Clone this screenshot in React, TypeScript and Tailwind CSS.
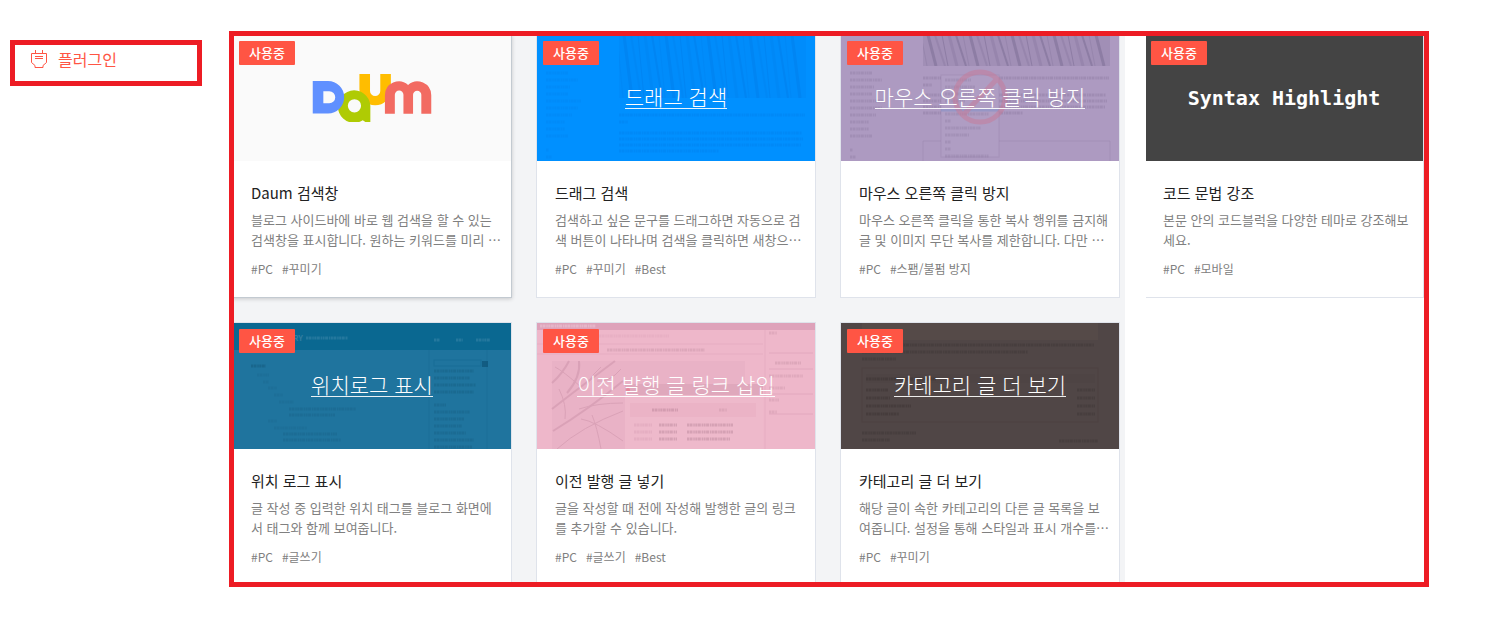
import type { ReactNode } from 'react'
import { clsx } from 'clsx'

interface Plugin {
  id: string
  name: string
  lines: string[]
  tags: string[]
  bannerClass: string
  banner: ReactNode
  art?: ReactNode
  active?: boolean
}

interface TextRowsProps {
  x: number
  y: number
  widths: number[]
  step?: number
  color: string
  opacity?: number
}

// Barely visible "lines of text" inside the banner thumbnails
function TextRows({ x, y, widths, step = 7, color, opacity = 0.15 }: TextRowsProps) {
  return (
    <g stroke={color} strokeWidth="3" strokeDasharray="2 0.5 3 0.8 1.5 0.5" opacity={opacity * 0.55}>
      {widths.map((w, i) => (
        <path key={i} d={`M${x} ${y + i * step}h${w}`} />
      ))}
    </g>
  )
}

function Records({ height, color, opacity }: { height: number; color: string; opacity: number }) {
  const slots = Array.from({ length: 26 }, (_, i) => i)
  return (
    <svg x="82" y="0" width="187" height={height} stroke={color}>
      <rect width="187" height={height} fill={color} stroke="none" opacity={opacity / 2} />
      {slots.map((i) => (
        <path
          key={i}
          d={`M${i * 7 - 2} 0L${i * 7 + 4 + (i % 3) * 2} ${height}`}
          strokeWidth={1 + ((i * 5) % 3)}
          opacity={i % 2 ? opacity : opacity * 0.5}
        />
      ))}
    </svg>
  )
}

function DragArt() {
  return (
    <>
      <Records height={63} color="#0066d0" opacity={0.18} />
      <TextRows x={9} y={38} widths={[22, 32, 24, 22, 35, 32, 26, 19, 19, 22]} color="#0058c0" />
      <TextRows x={9} y={115} widths={[3, 6]} color="#0058c0" />
      <TextRows x={82} y={80} widths={[186, 9]} color="#0058c0" opacity={0.2} />
      <TextRows x={82} y={98} widths={[183, 184, 182, 100]} step={6} color="#0058c0" opacity={0.2} />
    </>
  )
}

function RightClickArt() {
  return (
    <>
      <Records height={31} color="#5c4f78" opacity={0.28} />
      <TextRows x={9} y={38} widths={[22, 32, 24, 22, 35, 32, 26, 19, 19, 22]} color="#5c4a70" opacity={0.25} />
      <TextRows x={9} y={115} widths={[3, 6]} color="#5c4a70" opacity={0.25} />
      <TextRows x={82} y={43} widths={[186, 9]} color="#5c4a70" opacity={0.3} />
      <TextRows x={82} y={60} widths={[183, 184, 182, 100]} step={6} color="#5c4a70" opacity={0.3} />
      <path d="M82 106h187v20M82 106v20" fill="none" stroke="#8d7ba3" opacity="0.25" />
      <rect x="100" y="40" width="58" height="82" fill="#af9dc3" stroke="#8d7ba3" strokeOpacity="0.3" />
      <path d="M100 75h58" stroke="#8090c8" strokeWidth="3" opacity="0.5" />
      <TextRows x={104} y={45} widths={[26, 30, 26, 20]} color="#5c4a70" opacity={0.25} />
      <TextRows x={104} y={79} widths={[44, 6, 36, 24, 6, 6, 44]} color="#5c4a70" opacity={0.25} />
      <g fill="none" stroke="#c87a98" strokeWidth="5" opacity="0.5">
        <circle cx="139" cy="62" r="25" />
        <path d="M122 80L156 44" />
      </g>
    </>
  )
}

function LocationArt() {
  return (
    <>
      <rect width="278" height="27" fill="#0a6891" />
      <path d="M196 27v99M254 27v99" stroke="#135f85" opacity="0.2" />
      <text x="60" y="18" fontSize="8" fontWeight="700" fill="#4389aa" opacity="0.7">RY</text>
      <TextRows x={73} y={15} widths={[42]} color="#5a9aba" opacity={0.6} />
      <TextRows x={201} y={17} widths={[6]} color="#5a9aba" opacity={0.6} />
      <TextRows x={223} y={17} widths={[7]} color="#5a9aba" opacity={0.6} />
      <TextRows x={243} y={17} widths={[14]} color="#5a9aba" opacity={0.6} />
      <rect x="201" y="37" width="47" height="6" fill="none" stroke="#0a5c85" opacity="0.3" />
      <rect x="249" y="38" width="6" height="6" fill="#0a4c70" opacity="0.6" />
      <TextRows x={18} y={43} widths={[15]} color="#0a4260" opacity={0.5} />
      <TextRows x={24} y={52} widths={[12]} color="#0a4260" />
      <TextRows x={30} y={59} widths={[6]} color="#0a4260" />
      <TextRows x={35} y={65} widths={[9]} color="#0a4260" />
      <TextRows x={41} y={72} widths={[9]} color="#0a4260" />
      <TextRows x={46} y={79} widths={[15]} color="#0a4260" />
      <TextRows x={56} y={86} widths={[67, 46]} step={6} color="#0a4260" opacity={0.25} />
      <TextRows x={35} y={98} widths={[9]} color="#0a4260" />
      <TextRows x={41} y={105} widths={[33]} color="#0a4260" />
      <TextRows x={50} y={111} widths={[54, 58]} step={6} color="#0a4260" opacity={0.25} />
      <TextRows x={201} y={48} widths={[40, 36, 42, 40]} color="#0a4260" opacity={0.35} />
      <TextRows x={201} y={82} widths={[12, 36, 30, 28, 32, 40, 38]} color="#0a4260" opacity={0.3} />
    </>
  )
}

function PostLinkArt() {
  return (
    <>
      <rect width="278" height="7" fill="#c98aa6" opacity="0.45" />
      <TextRows x={3} y={3} widths={[56]} color="#fff" opacity={0.4} />
      <path d="M0 21h226M0 31h226M228 7v119" stroke="#c98aa6" opacity="0.2" />
      <TextRows x={62} y={13} widths={[70]} color="#b0708c" opacity={0.15} />
      <TextRows x={70} y={27} widths={[98]} color="#8c5a70" opacity={0.3} />
      <rect x="15" y="38" width="193" height="88" fill="#dca4ba" opacity="0.25" />
      <g fill="none" stroke="#a86a84" opacity="0.22">
        <path d="M15 86Q38 68 78 38M30 70Q44 54 42 38M15 60Q26 50 32 38M16 108Q52 86 86 58" strokeWidth="2" />
        <path d="M20 126Q44 104 86 88M42 86Q60 80 86 80M50 62Q54 52 64 44M28 96Q30 82 22 66M55 92Q60 104 64 126" />
        <path d="M60 58Q72 60 84 46M18 44Q26 48 44 64M44 96Q58 98 86 118" />
      </g>
      <rect x="88" y="61" width="138" height="65" fill="#eeb9cb" />
      <rect x="88" y="61" width="138" height="11" fill="#cf98ae" opacity="0.5" />
      <circle cx="91" cy="67" r="2" fill="#ef6f86" opacity="0.6" />
      <rect x="93" y="80" width="126" height="14" fill="#e5a9be" opacity="0.4" />
      <TextRows x={115} y={87} widths={[26]} color="#8c5a70" opacity={0.45} />
      <TextRows x={182} y={87} widths={[8]} color="#8c5a70" opacity={0.25} />
      <TextRows x={97} y={102} widths={[18, 18, 18]} color="#b0708c" opacity={0.25} />
      <TextRows x={122} y={102} widths={[18, 18, 18]} color="#8c5a70" opacity={0.45} />
      <TextRows x={150} y={102} widths={[46, 46, 43]} color="#8c5a70" opacity={0.45} />
      <TextRows x={232} y={10} widths={[8]} color="#8c5a70" opacity={0.25} />
      <TextRows x={238} y={40} widths={[26]} color="#8c5a70" opacity={0.3} />
      <TextRows x={232} y={53} widths={[34, 16, 10, 8]} step={12} color="#8c5a70" opacity={0.25} />
      <path d="M232 30h44M232 46h44M232 71h44M232 91h44" stroke="#c98aa6" opacity="0.3" />
    </>
  )
}

function CategoryArt() {
  return (
    <>
      <rect x="21" y="0" width="236" height="17" fill="#5c504a" opacity="0.4" />
      <TextRows x={21} y={22} widths={[232, 166, 34]} color="#2c2524" opacity={0.4} />
      <rect x="21" y="45" width="236" height="54" fill="none" stroke="#443b3b" opacity="0.35" />
      <rect x="25" y="51" width="229" height="9" fill="#4a4040" opacity="0.4" />
      <TextRows x={25} y={56} widths={[70]} color="#2c2524" opacity={0.5} />
      <TextRows x={25} y={67} widths={[22, 24, 45, 33]} step={8} color="#2c2524" opacity={0.5} />
      <TextRows x={236} y={67} widths={[18, 18, 18, 18]} step={8} color="#2c2524" opacity={0.4} />
      <TextRows x={21} y={110} widths={[54, 28]} color="#2c2524" opacity={0.4} />
      <TextRows x={218} y={118} widths={[39]} color="#2c2524" opacity={0.4} />
    </>
  )
}

function DaumLogo() {
  return (
    <svg viewBox="22 17 358 145" className="h-12 w-30" role="img" aria-label="Daum">
      <path fill="#ffbd00" d="M163 17h32v51a15 15 0 0 0 31 0v-51h32v47a47.500 47.500 0 0 1-95 0z" />
      <path
        fill="#afcb04"
        fillRule="evenodd"
        d="M196 113v49h-15l-8-5a49 49 0 1 1 23-44zM148 93a20 20 0 1 0 0 40a20 20 0 0 0 0-40z"
      />
      <path
        fill="#6090ff"
        fillRule="evenodd"
        d="M22 38h46a49 49 0 0 1 0 98h-46zM54 69v36h18a18 18 0 0 0 0-36z"
      />
      <path
        fill="#f26b62"
        d="M240 137v-56a42 42 0 0 1 70-31a42 42 0 0 1 70 31v56h-30v-57a12 12 0 0 0-25 0v57h-29v-57a13 13 0 0 0-26 0v57z"
      />
    </svg>
  )
}

function PlugIcon() {
  return (
    <svg viewBox="0 0 16 18" className="h-[18px] w-4" fill="none" stroke="currentColor" aria-hidden="true">
      <path d="M4.500 0v3.500M11.500 0v3.500M0.500 3.500h15v9l-3.500 3v2h-8v-2l-3.500-3zM4 6.500h8M4 8.500h8" />
    </svg>
  )
}

function BannerTitle({ children }: { children: ReactNode }) {
  return (
    <span className="mb-1 block border-b border-white/90 text-[21px] leading-6 font-light whitespace-nowrap text-white">
      {children}
    </span>
  )
}

const PLUGINS: Plugin[] = [
  {
    id: 'daum-search',
    name: 'Daum 검색창',
    lines: ['블로그 사이드바에 바로 웹 검색을 할 수 있는', '검색창을 표시합니다. 원하는 키워드를 미리 …'],
    tags: ['#PC', '#꾸미기'],
    bannerClass: 'bg-[#fafafa]',
    banner: <DaumLogo />,
    active: true,
  },
  {
    id: 'drag-search',
    name: '드래그 검색',
    lines: ['검색하고 싶은 문구를 드래그하면 자동으로 검', '색 버튼이 나타나며 검색을 클릭하면 새창으…'],
    tags: ['#PC', '#꾸미기', '#Best'],
    bannerClass: 'bg-[#0090ff]',
    banner: <BannerTitle>드래그 검색</BannerTitle>,
    art: <DragArt />,
  },
  {
    id: 'right-click',
    name: '마우스 오른쪽 클릭 방지',
    lines: ['마우스 오른쪽 클릭을 통한 복사 행위를 금지해', '글 및 이미지 무단 복사를 제한합니다. 다만 …'],
    tags: ['#PC', '#스팸/불펌 방지'],
    bannerClass: 'bg-[#ad9ac1]',
    banner: <BannerTitle>마우스 오른쪽 클릭 방지</BannerTitle>,
    art: <RightClickArt />,
  },
  {
    id: 'location-log',
    name: '위치 로그 표시',
    lines: ['글 작성 중 입력한 위치 태그를 블로그 화면에', '서 태그와 함께 보여줍니다.'],
    tags: ['#PC', '#글쓰기'],
    bannerClass: 'bg-[#1f749e]',
    banner: <BannerTitle>위치로그 표시</BannerTitle>,
    art: <LocationArt />,
  },
  {
    id: 'previous-post',
    name: '이전 발행 글 넣기',
    lines: ['글을 작성할 때 전에 작성해 발행한 글의 링크', '를 추가할 수 있습니다.'],
    tags: ['#PC', '#글쓰기', '#Best'],
    bannerClass: 'bg-[#eeb7ca]',
    banner: <BannerTitle>이전 발행 글 링크 삽입</BannerTitle>,
    art: <PostLinkArt />,
  },
  {
    id: 'category-more',
    name: '카테고리 글 더 보기',
    lines: ['해당 글이 속한 카테고리의 다른 글 목록을 보', '여줍니다. 설정을 통해 스타일과 표시 개수를…'],
    tags: ['#PC', '#꾸미기'],
    bannerClass: 'bg-[#504646]',
    banner: <BannerTitle>카테고리 글 더 보기</BannerTitle>,
    art: <CategoryArt />,
  },
]

const SYNTAX_PLUGIN: Plugin = {
  id: 'syntax-highlight',
  name: '코드 문법 강조',
  lines: ['본문 안의 코드블럭을 다양한 테마로 강조해보', '세요.'],
  tags: ['#PC', '#모바일'],
  bannerClass: 'bg-[#444444]',
  banner: (
    <span className="font-['DejaVu_Sans_Mono',monospace] text-[20px] leading-6 font-bold text-white">
      Syntax Highlight
    </span>
  ),
}

function PluginCard({ plugin }: { plugin: Plugin }) {
  return (
    <article
      className={clsx(
        'border bg-white',
        plugin.active ? 'border-[#c3cad1] shadow-[0_1px_4px_rgba(0,0,0,0.18)]' : 'border-[#dfe3eb]',
      )}
    >
      <div className={clsx('relative flex h-[126px] items-center justify-center', plugin.bannerClass)}>
        {plugin.art && (
          <svg
            viewBox="0 0 278 126"
            preserveAspectRatio="none"
            className="absolute inset-0 h-full w-full"
            aria-hidden="true"
          >
            {plugin.art}
          </svg>
        )}
        <div className="relative">{plugin.banner}</div>
        <span className="absolute top-1.5 left-1.5 h-6 w-14 rounded-[1px] bg-[#ff5544] text-center text-[13px] leading-6 font-medium text-white">
          사용중
        </span>
      </div>
      <div className="px-[18px] pt-5 pb-[18px]">
        <h2 className="text-[15px] leading-6 text-[#222222]">{plugin.name}</h2>
        <p className="mt-[5px] h-10 text-[13px] leading-5 whitespace-pre text-[#808080]">
          {plugin.lines.join('\n')}
        </p>
        <ul className="mt-[9px] flex gap-[9px] text-xs leading-5 text-[#808080]">
          {plugin.tags.map((tag) => (
            <li key={tag}>{tag}</li>
          ))}
        </ul>
      </div>
    </article>
  )
}

export default function App() {
  return (
    <div
      lang="ko"
      className="flex items-start bg-white pt-[31px] pr-[58px] pb-12 pl-2.5 font-['Noto_Sans_CJK_KR',sans-serif]"
    >
      <nav className="mt-[9px] w-48 shrink-0 border-5 border-[#ed1c24]">
        <a href="#plugins" className="flex h-9 items-center gap-[11px] px-4 pb-2 text-base leading-6 text-[#ff5544]">
          <PlugIcon />
          플러그인
        </a>
      </nav>

      <main id="plugins" className="ml-[27px] flex flex-1 overflow-hidden border-5 border-[#ed1c24]">
        <section className="flex-1 overflow-hidden bg-[#f3f4f6]">
          <div className="-mt-0.5 -mb-1 -ml-0.5 grid grid-cols-3 gap-6 pr-[5px]">
            {PLUGINS.map((p) => (
              <PluginCard key={p.id} plugin={p} />
            ))}
          </div>
        </section>

        {/* Last column is clipped on the left, same as the first one */}
        <section className="w-[299px] shrink-0 pl-[21px]">
          <div className="overflow-hidden">
            <div className="-mt-0.5 -ml-0.5">
              <PluginCard plugin={SYNTAX_PLUGIN} />
            </div>
          </div>
        </section>
      </main>
    </div>
  )
}
